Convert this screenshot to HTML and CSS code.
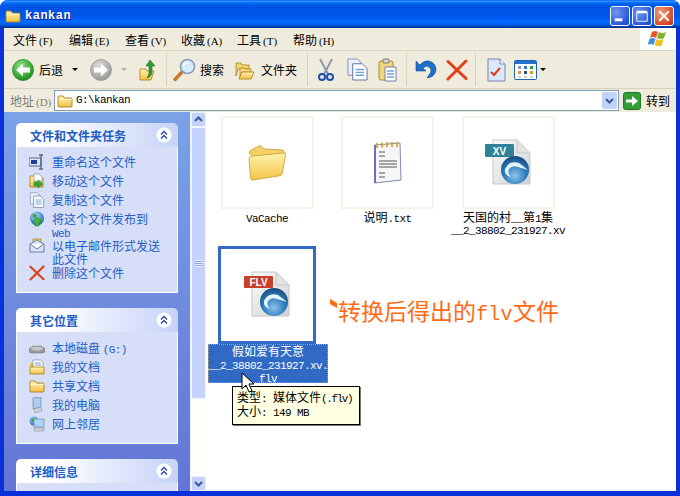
FILE: index.html
```html
<!DOCTYPE html>
<html lang="zh-CN">
<head>
  <meta charset="UTF-8">
  <title>kankan</title>
  <link rel="stylesheet" href="styles.css">
</head>
<body>
  <!-- shared icons -->
  <svg class="sprite" xmlns="http://www.w3.org/2000/svg">
    <defs>
      <linearGradient id="gFolder" x1="0" y1="0" x2="0" y2="1"><stop offset="0" stop-color="#fff3b0"/><stop offset="1" stop-color="#f3c445"/></linearGradient>
      <linearGradient id="gPage" x1="0" y1="0" x2="1" y2="1"><stop offset="0" stop-color="#fafafa"/><stop offset="1" stop-color="#cfd3d6"/></linearGradient>
      <radialGradient id="gBack" cx=".4" cy=".3" r=".8"><stop offset="0" stop-color="#8fe07f"/><stop offset=".6" stop-color="#3cae35"/><stop offset="1" stop-color="#187a1c"/></radialGradient>
      <radialGradient id="gFwd" cx=".4" cy=".3" r=".8"><stop offset="0" stop-color="#dcdcdc"/><stop offset="1" stop-color="#8f8f8f"/></radialGradient>
      <radialGradient id="gSwirl" cx=".5" cy=".7" r=".7"><stop offset="0" stop-color="#8cc4ea"/><stop offset=".55" stop-color="#2f7fbe"/><stop offset="1" stop-color="#14497f"/></radialGradient>
      <radialGradient id="gGlobe" cx=".4" cy=".3" r=".8"><stop offset="0" stop-color="#a8d8ff"/><stop offset="1" stop-color="#1a55b8"/></radialGradient>
      <symbol id="folder" viewBox="0 0 16 16">
        <path d="M1 4q0-1 1-1h4l1.500 2H14q1 0 1 1v7q0 1-1 1H2q-1 0-1-1z" fill="url(#gFolder)" stroke="#a87e1c" stroke-width=".9"/>
        <path d="M1.500 6.500h13" stroke="#fff7cf" stroke-width="1"/>
      </symbol>
      <symbol id="page-copy" viewBox="0 0 22 24">
        <path d="M1 1h10l4 4v13H1z" fill="#eaf1fb" stroke="#7f8fb5"/>
        <path d="M6 6h10l5 5v12H6z" fill="#fff" stroke="#5c6f9e"/>
        <path d="M9 12h9M9 15h9M9 18h9" stroke="#6f9fd8" stroke-width="1.400"/>
      </symbol>
      <symbol id="red-x" viewBox="0 0 22 22">
        <path d="M2 2.500l18 17M20 2l-18 18" stroke="#e1401c" stroke-width="3" stroke-linecap="round"/>
      </symbol>
      <symbol id="swirl" viewBox="0 0 30 30">
        <circle cx="15" cy="15" r="14" fill="url(#gSwirl)"/>
        <path d="M5 14q4-9 14-6l9 7-10-3q-6-2-9 2-2 4 2 8-7-2-6-8z" fill="#e6f3fb"/>
      </symbol>
      <symbol id="chev" viewBox="0 0 16 16">
        <circle cx="8" cy="8" r="7.500" fill="#fff"/>
        <path d="M5 7.500l3-3 3 3M5 11.500l3-3 3 3" fill="none" stroke="#2a52a8" stroke-width="1.500"/>
      </symbol>
    </defs>
  </svg>

  <div class="window">
    <div class="titlebar">
      <svg class="title-icon" width="16" height="16"><use href="#folder"/></svg>
      <span class="title-text">kankan</span>
      <div class="title-btns">
        <div class="tb">
          <svg width="20" height="20" viewBox="0 0 21 21"><rect x="5" y="13" width="8" height="3" fill="#fff"/></svg>
        </div>
        <div class="tb">
          <svg width="20" height="20" viewBox="0 0 21 21"><path d="M5 7h11v9H5z" fill="none" stroke="#fff"/><rect x="5" y="5" width="11" height="2.500" fill="#fff"/></svg>
        </div>
        <div class="tb tb-close">
          <svg width="20" height="20" viewBox="0 0 21 21"><path d="M5.500 5.500l10 10M15.500 5.500l-10 10" stroke="#fff" stroke-width="2"/></svg>
        </div>
      </div>
    </div>

    <div class="frame">
      <div class="menubar">
        <div class="menus">
          <span class="menu">文件<i>(F)</i></span>
          <span class="menu">编辑<i>(E)</i></span>
          <span class="menu">查看<i>(V)</i></span>
          <span class="menu">收藏<i>(A)</i></span>
          <span class="menu">工具<i>(T)</i></span>
          <span class="menu">帮助<i>(H)</i></span>
        </div>
        <div class="flag">
          <svg width="20" height="18" viewBox="0 0 20 18">
            <path d="M4 2q3-2 6 0l-2 6q-3-2-6 0z" fill="#e8562a"/>
            <path d="M11 2q3 2 7 0l-2 6q-3 2-7 0z" fill="#7ab52c"/>
            <path d="M1.500 9q3-2 6 0l-2 6q-3-2-6 0z" fill="#3e8fe0"/>
            <path d="M8.500 9q3 2 7 0l-2 7q-3 1-7-1z" fill="#f3c21a"/>
          </svg>
        </div>
      </div>

      <div class="toolbar">
        <svg class="t-back" width="22" height="22" viewBox="0 0 22 22">
          <circle cx="11" cy="11" r="10.500" fill="url(#gBack)" stroke="#2c8a2c" stroke-width=".8"/>
          <path d="M4 11l7-6.500V8.500h7v5h-7v4z" fill="#fff"/>
        </svg>
        <span class="t-label t-back-label">后退</span>
        <span class="caret t-caret1"></span>
        <svg class="t-fwd" width="22" height="22" viewBox="0 0 22 22">
          <circle cx="11" cy="11" r="10.500" fill="url(#gFwd)" stroke="#999" stroke-width=".8"/>
          <path d="M18 11l-7-6.500V8.500H4v5h7v4z" fill="#fff"/>
        </svg>
        <span class="caret caret-off t-caret2"></span>
        <svg class="t-up" width="18" height="22" viewBox="0 0 18 22">
          <path d="M1 10h6l1 2h7l-3 9H1z" fill="url(#gFolder)" stroke="#a87e1c" stroke-width=".8"/>
          <path d="M11 1l5 6h-3v7q-1 4-5 5 2-3 2-5V7H7z" fill="#2f9e34" stroke="#1c6f22" stroke-width=".6"/>
        </svg>
        <span class="sep t-sep1"></span>
        <svg class="t-search" width="23" height="24" viewBox="0 0 23 24">
          <path d="M9 14l-7 7.500" stroke="#c9792b" stroke-width="3.400" stroke-linecap="round"/>
          <circle cx="14.500" cy="8.500" r="7" fill="#d4ebfb" stroke="#8a9bb3" stroke-width="1.600"/>
          <path d="M10.500 8q1-3.500 4.500-3.500" fill="none" stroke="#fff" stroke-width="1.500"/>
        </svg>
        <span class="t-label t-search-label">搜索</span>
        <svg class="t-folders" width="20" height="20" viewBox="0 0 20 20">
          <path d="M1 3h5l1 2h7v4H3l-2 7z" fill="#f2d675" stroke="#a87e1c" stroke-width=".8"/>
          <path d="M5 8h4l1 1h6v3H7l-2 6z" fill="#f7e08c" stroke="#a87e1c" stroke-width=".8"/>
          <path d="M7 12h12l-3 7H4z" fill="url(#gFolder)" stroke="#a87e1c" stroke-width=".8"/>
        </svg>
        <span class="t-label t-folders-label">文件夹</span>
        <span class="sep t-sep2"></span>
        <svg class="t-cut" width="16" height="24" viewBox="0 0 16 24">
          <path d="M2 1l8 15M14 1L6 16" stroke="#8d97a8" stroke-width="2"/>
          <circle cx="4" cy="19" r="3" fill="none" stroke="#1f4fa8" stroke-width="2"/>
          <circle cx="12" cy="19" r="3" fill="none" stroke="#1f4fa8" stroke-width="2"/>
        </svg>
        <svg class="t-copy" width="21" height="23"><use href="#page-copy"/></svg>
        <svg class="t-paste" width="19" height="24" viewBox="0 0 19 24">
          <rect x="1" y="3" width="14" height="19" rx="2" fill="#f0d77f" stroke="#a68a32"/>
          <rect x="5" y="1" width="6" height="4" rx="1" fill="#d8d8d8" stroke="#777"/>
          <path d="M7 9h11v14H7z" fill="#fff" stroke="#6f80a8"/>
          <path d="M9 13h7M9 16h7M9 19h7" stroke="#6f9fd8" stroke-width="1.300"/>
        </svg>
        <span class="sep t-sep3"></span>
        <svg class="t-undo" width="22" height="20" viewBox="0 0 22 20">
          <path d="M1 1v10h10L8 8q3-3 6-1 4 3 0 8l-2 3q8-1 9-8 0-7-7-9Q9 0 5 5z" fill="#1f6fc8" stroke="#124e9a" stroke-width=".6"/>
        </svg>
        <svg class="t-del" width="22" height="22"><use href="#red-x"/></svg>
        <span class="sep t-sep4"></span>
        <svg class="t-props" width="19" height="24" viewBox="0 0 19 24">
          <path d="M1 1h12l5 5v17H1z" fill="#dbe8fb" stroke="#6f86b5"/>
          <path d="M13 1v5h5" fill="#fff" stroke="#6f86b5"/>
          <path d="M4 14l3 3 6-7" fill="none" stroke="#e1401c" stroke-width="2.200"/>
        </svg>
        <svg class="t-views" width="23" height="20" viewBox="0 0 23 20">
          <rect x=".5" y=".5" width="22" height="19" rx="1" fill="#fff" stroke="#1f62b5"/>
          <rect x="1" y="1" width="21" height="3" fill="#1f72cc"/>
          <rect x="4" y="6" width="3" height="3" fill="#8e8fc0"/><rect x="10" y="6" width="3" height="3" fill="#2f6fc8"/><rect x="16" y="6" width="3" height="3" fill="#2f9e44"/>
          <rect x="4" y="11" width="3" height="3" fill="#ef8a4a"/><rect x="10" y="11" width="3" height="3" fill="#1f4f9e"/><rect x="16" y="11" width="3" height="3" fill="#c9a51a"/>
          <path d="M4 17h3M10 17h3M16 17h3" stroke="#a5a5a5"/>
        </svg>
        <span class="caret t-caret3"></span>
      </div>

      <div class="addressbar">
        <span class="addr-label">地址<i>(D)</i></span>
        <div class="addr-field">
          <svg width="16" height="16"><use href="#folder"/></svg>
          <span class="lat addr-text">G:\kankan</span>
          <div class="combo">
            <svg width="15" height="17" viewBox="0 0 15 17"><path d="M4 7l3.500 3.500L11 7" fill="none" stroke="#3d5a98" stroke-width="2"/></svg>
          </div>
        </div>
        <div class="go">
          <svg width="18" height="18" viewBox="0 0 18 18">
            <rect x=".5" y=".5" width="17" height="17" rx="2" fill="#2f9e34" stroke="#1f7a26"/>
            <path d="M3 7.500h6V4l6 5-6 5v-3.500H3z" fill="#fff"/>
          </svg>
          <span>转到</span>
        </div>
      </div>

      <div class="body">
        <aside class="pane">
          <section class="panel">
            <div class="panel-head">
              <h2>文件和文件夹任务</h2>
              <svg width="16" height="16"><use href="#chev"/></svg>
            </div>
            <ul class="panel-body">
              <li class="task">
                <svg width="16" height="16" viewBox="0 0 16 16"><rect x="0" y="4" width="12" height="8" fill="#dfe6f2" stroke="#5a6478"/><rect x="2" y="6" width="6" height="4" fill="#173f9e"/><path d="M12 1v14M10 1h4M10 15h4" stroke="#5a6478" stroke-width="1.300"/></svg>
                <span>重命名这个文件</span>
              </li>
              <li class="task">
                <svg width="16" height="16" viewBox="0 0 16 16"><path d="M1 3h5l1 2h7v9H1z" fill="url(#gFolder)" stroke="#a87e1c" stroke-width=".8"/><path d="M5 1h5l3 3v4H5z" fill="#fff" stroke="#8a93a8" stroke-width=".7"/><path d="M5 9h4V7l5 4-5 4v-2H5z" fill="#3aa33f" stroke="#1f7a26" stroke-width=".5"/></svg>
                <span>移动这个文件</span>
              </li>
              <li class="task">
                <svg width="16" height="16"><use href="#page-copy"/></svg>
                <span>复制这个文件</span>
              </li>
              <li class="task">
                <svg width="16" height="16" viewBox="0 0 16 16"><circle cx="8" cy="7.500" r="7" fill="url(#gGlobe)"/><path d="M3 4q3-2 5 0 0 3-3 3zM10 9l3-2 1 2-3 3z" fill="#3fa83f"/><path d="M8 6l5 5h-3v4H6v-4H3z" fill="#47b83f" stroke="#1f7a26" stroke-width=".5"/></svg>
                <span>将这个文件发布到<br><span class="lat">Web</span></span>
              </li>
              <li class="task">
                <svg width="16" height="16" viewBox="0 0 16 16"><path d="M4 5V1h8v4" fill="#f2d675" stroke="#a87e1c" stroke-width=".7"/><path d="M1 6l7-4 7 4v8H1z" fill="#d8e3f5" stroke="#6d7ea3"/><path d="M1 6l7 5 7-5" fill="#fff" stroke="#6d7ea3"/></svg>
                <span>以电子邮件形式发送<br>此文件</span>
              </li>
              <li class="task">
                <svg width="16" height="16"><use href="#red-x"/></svg>
                <span>删除这个文件</span>
              </li>
            </ul>
          </section>

          <section class="panel panel-places">
            <div class="panel-head">
              <h2>其它位置</h2>
              <svg width="16" height="16"><use href="#chev"/></svg>
            </div>
            <ul class="panel-body">
              <li class="task">
                <svg width="16" height="16" viewBox="0 0 16 16"><path d="M0 9l4-3h8l4 3v3l-3 1H3l-3-1z" fill="#9a9a9a" stroke="#666" stroke-width=".5"/><ellipse cx="8" cy="8.500" rx="6" ry="2" fill="#c8c8c8"/></svg>
                <span>本地磁盘 <span class="lat">(G:)</span></span>
              </li>
              <li class="task">
                <svg width="16" height="16" viewBox="0 0 16 16"><path d="M1 4h3v10H1z" fill="#f0b93f"/><path d="M4 1h8l2 2v7H4z" fill="#fff" stroke="#7a8aa8" stroke-width=".7"/><path d="M1 8h14v7H1z" fill="url(#gFolder)" stroke="#a87e1c" stroke-width=".8"/><path d="M6 4h6M6 6h6" stroke="#7a9ed0"/></svg>
                <span>我的文档</span>
              </li>
              <li class="task">
                <svg width="16" height="16"><use href="#folder"/></svg>
                <span>共享文档</span>
              </li>
              <li class="task">
                <svg width="16" height="16" viewBox="0 0 16 16"><path d="M4 1l8-1v10l-8 2z" fill="#a9cdf5" stroke="#7b8794" stroke-width=".7"/><path d="M5 12l7-2 1 4-7 2z" fill="#cdd1d8" stroke="#7b8794" stroke-width=".5"/></svg>
                <span>我的电脑</span>
              </li>
              <li class="task">
                <svg width="16" height="16" viewBox="0 0 16 16"><circle cx="5" cy="5" r="4.500" fill="url(#gGlobe)"/><path d="M2 3l3-1 1 3-3 1z" fill="#3fa83f"/><rect x="5" y="3" width="10" height="8" fill="#a9d5f8" stroke="#7b8794" stroke-width=".7"/><path d="M5 12h10v3H5z" fill="#d0d4da" stroke="#7b8794" stroke-width=".5"/></svg>
                <span>网上邻居</span>
              </li>
            </ul>
          </section>

          <section class="panel">
            <div class="panel-head">
              <h2>详细信息</h2>
              <svg width="16" height="16"><use href="#chev"/></svg>
            </div>
            <div class="panel-body panel-empty"></div>
          </section>
        </aside>

        <div class="scrollbar">
          <div class="sb-btn">
            <svg width="15" height="15" viewBox="0 0 15 15"><path d="M4 9l3.500-3.500L11 9" fill="none" stroke="#3d5a98" stroke-width="2"/></svg>
          </div>
          <div class="sb-thumb"><span class="sb-grip"></span></div>
          <div class="sb-track"></div>
          <div class="sb-btn">
            <svg width="15" height="15" viewBox="0 0 15 15"><path d="M4 6l3.500 3.500L11 6" fill="none" stroke="#3d5a98" stroke-width="2"/></svg>
          </div>
        </div>

        <main class="files">
          <div class="item">
            <div class="thumb">
              <svg width="38" height="36" viewBox="0 0 38 36">
                <path d="M1 8q0-2 2-3l8-4q2-1 3 1l2 2 18 1q2 0 2 2v2l-30 3z" fill="#f3d167" stroke="#c79a2a" stroke-width=".8"/>
                <path d="M4 11l32-3q2 0 1.500 2L34 29q-.5 1.500-2 1.700L5 35q-2 .3-2.500-1.500L1 14q0-2.500 3-3z" fill="url(#gFolder)" stroke="#c79a2a" stroke-width=".8"/>
              </svg>
            </div>
            <div class="label"><span class="lat">VaCache</span></div>
          </div>
          <div class="item">
            <div class="thumb">
              <svg width="28" height="44" viewBox="0 0 28 44">
                <path d="M1 4l25-2 1 37-26 3z" fill="#f6f6f8" stroke="#7f88b5"/>
                <path d="M1 4v38" stroke="#6f6fc0" stroke-width="2"/>
                <path d="M3 2v5M8 1.500v5M13 1v5M18 1v5M23 1v5" stroke="#d8a62a" stroke-width="1.800"/>
                <path d="M5 11h6M5 15h6M5 20h18M5 23h18M5 26h18M5 32h6M5 36h6" stroke="#555" stroke-width="1.200"/>
              </svg>
            </div>
            <div class="label">说明<span class="lat">.txt</span></div>
          </div>
          <div class="item">
            <div class="thumb">
              <svg class="doc" width="46" height="46" viewBox="0 0 46 46">
                <path d="M8 1h24l13 13v31H8z" fill="url(#gPage)" stroke="#c6c6c6"/>
                <path d="M32 1v13h13z" fill="#e3e3e3" stroke="#c6c6c6"/>
                <rect x="0" y="5" width="29" height="13" rx="1" fill="#2f8396"/>
                <text x="14.500" y="15.500" class="badge">XV</text>
                <use href="#swirl" x="15" y="16" width="30" height="30"/>
              </svg>
            </div>
            <div class="label">天国的村<span class="lat">__</span>第<span class="lat">1</span>集<br><span class="lat">__2_38802_231927.xv</span></div>
          </div>
          <div class="item">
            <div class="thumb thumb-sel">
              <svg class="doc" width="46" height="46" viewBox="0 0 46 46">
                <path d="M8 1h24l13 13v31H8z" fill="url(#gPage)" stroke="#c6c6c6"/>
                <path d="M32 1v13h13z" fill="#e3e3e3" stroke="#c6c6c6"/>
                <rect x="0" y="5" width="29" height="12" rx="1" fill="#c8402c"/>
                <text x="14.500" y="15" class="badge">FLV</text>
                <use href="#swirl" x="15" y="16" width="30" height="30"/>
              </svg>
            </div>
            <div class="label label-sel">假如爱有天意<br><span class="lat">__2_38802_231927.xv.<br>flv</span></div>
          </div>

          <!-- over the list -->
          <div class="note">
            <span class="note-mark"></span>转换后得出的<span class="note-lat">flv</span>文件
          </div>
          <div class="tooltip">
            <div>类型<span class="lat">: </span>媒体文件<span class="lat tip-ext">(.flv)</span></div>
            <div>大小<span class="lat">: 149 MB</span></div>
          </div>
          <svg class="cursor" width="13" height="21" viewBox="0 0 13 21">
            <path d="M1 1v16l4-4 3 7 3-1-3-7h5z" fill="#fff" stroke="#000"/>
          </svg>
        </main>
      </div>
    </div>
  </div>
</body>
</html>
```
FILE: styles.css
```css
html, body {
  margin: 0;
  padding: 0;
}
body {
  width: 680px;
  height: 496px;
  overflow: hidden;
  background: #fff;
  font-family: "Noto Sans CJK SC", "Liberation Sans", sans-serif;
  font-size: 12px;
  line-height: 13px;
  color: #000;
}
svg {
  display: block;
  flex: none;
}
.sprite {
  width: 0;
  height: 0;
}
.lat {
  font-family: "Liberation Mono", monospace;
  font-size: 11px;
  letter-spacing: -.6px;
  line-height: 0;
}
i {
  font-family: "Liberation Serif", serif;
  font-style: normal;
  font-size: 11px;
  line-height: 0;
  margin-left: 2px;
}

.window {
  width: 680px;
  height: 496px;
  display: flex;
  flex-direction: column;
  background: #0831d9;
  border-radius: 8px 8px 0 0;
  overflow: hidden;
}

/* title bar */
.titlebar {
  height: 28px;
  flex: none;
  box-sizing: border-box;
  display: flex;
  align-items: center;
  padding: 4px 6px 0 5px;
  background: linear-gradient(#0058ee 0, #3593ff 4%, #288eff 6%, #127dff 8%, #036ffc 10%, #0262ee 14%, #0057e5 20%, #0054e3 24%, #0055eb 56%, #005bf5 66%, #026afe 76%, #0062ef 86%, #0052d6 92%, #0040ab 94%, #003092 100%);
}
.title-text {
  margin-left: 4px;
  font-family: "Liberation Mono", monospace;
  font-size: 12px;
  font-weight: bold;
  letter-spacing: .5px;
  color: #fff;
  text-shadow: 1px 1px #0f1089;
}
.title-btns {
  margin-left: auto;
  display: flex;
  gap: 2px;
}
.tb {
  width: 18px;
  height: 18px;
  border: 1px solid #fff;
  border-radius: 3px;
  background: radial-gradient(circle at 30% 30%, #6f97f0, #2a57d8 70%, #1c3fb8);
}
.tb svg {
  margin: -1px;
}
.tb-close {
  background: radial-gradient(circle at 30% 30%, #f0a080, #d8502c 65%, #b83010);
}

.frame {
  flex: 1;
  min-height: 0;
  margin: 0 4px 5px;
  display: flex;
  flex-direction: column;
  background: #efecde;
}

/* menu */
.menubar {
  height: 22px;
  flex: none;
  display: flex;
  justify-content: space-between;
  border-bottom: 1px solid #dcd8c6;
}
.menus {
  display: flex;
  align-items: center;
  gap: 17px;
  padding-left: 9px;
}
.menu {
  display: block;
  width: 39px;
  white-space: nowrap;
}
.flag {
  width: 36px;
  display: flex;
  align-items: center;
  justify-content: center;
  background: #fff;
}

/* toolbar */
.toolbar {
  height: 37px;
  flex: none;
  display: flex;
  align-items: center;
  border-bottom: 1px solid #d8d2bd;
}
.t-label {
  white-space: nowrap;
}
.caret {
  width: 0;
  height: 0;
  border-left: 3px solid transparent;
  border-right: 3px solid transparent;
  border-top: 3px solid #000;
}
.caret-off {
  border-top-color: #b5b3a6;
}
.sep {
  width: 1px;
  height: 33px;
  background: #d8d2bd;
}
.t-back { margin-left: 8px; }
.t-back-label { margin-left: 5px; }
.t-caret1 { margin-left: 9px; }
.t-fwd { margin-left: 12px; }
.t-caret2 { margin-left: 9px; }
.t-up { margin-left: 12px; }
.t-sep1 { margin-left: 9px; }
.t-search { margin-left: 6px; }
.t-search-label { margin-left: 4px; }
.t-folders { margin-left: 11px; }
.t-folders-label { margin-left: 6px; }
.t-sep2 { margin-left: 10px; }
.t-cut { margin-left: 10px; }
.t-copy { margin-left: 13px; }
.t-paste { margin-left: 10px; }
.t-sep3 { margin-left: 9px; }
.t-undo { margin-left: 8px; }
.t-del { margin-left: 9px; }
.t-sep4 { margin-left: 7px; }
.t-props { margin-left: 11px; }
.t-views { margin-left: 8px; }
.t-caret3 { margin-left: 3px; }

/* address */
.addressbar {
  height: 23px;
  flex: none;
  display: flex;
  align-items: center;
  padding-left: 6px;
}
.addr-label {
  width: 44px;
  color: #7f7c73;
  white-space: nowrap;
}
.addr-field {
  width: 561px;
  height: 19px;
  display: flex;
  align-items: center;
  gap: 3px;
  padding-left: 2px;
  border: 1px solid #7f9db9;
  background: #fff;
  box-sizing: content-box;
}
.addr-text {
  flex: 1;
  line-height: 13px;
}
.combo {
  width: 15px;
  height: 17px;
  margin-right: 1px;
  background: #c3d2f8;
  border-radius: 2px;
}
.go {
  display: flex;
  align-items: center;
  gap: 5px;
  margin-left: 4px;
}

/* body */
.body {
  flex: 1;
  min-height: 0;
  display: flex;
}
.pane {
  width: 186px;
  flex: none;
  box-sizing: border-box;
  padding: 11px 12px 0;
  display: flex;
  flex-direction: column;
  gap: 15px;
  overflow: hidden;
  background: linear-gradient(#7ba2e7, #6375d6);
}
.panel {
  flex: none;
}
.panel-head {
  height: 24px;
  display: flex;
  align-items: center;
  justify-content: space-between;
  padding: 0 6px 0 14px;
  border-radius: 5px 5px 0 0;
  background: linear-gradient(90deg, #fff 20%, #c6d3f7);
}
.panel-head h2 {
  margin: 0;
  font-size: 12px;
  font-weight: bold;
  color: #215dc6;
}
.panel-body {
  list-style: none;
  margin: 0;
  padding: 7px 0 8px 12px;
  border: 1px solid #fff;
  border-top: 0;
  background: #d6dff7;
  color: #215dc6;
}
.panel-places .panel-body {
  padding-top: 8px;
}
.panel-empty {
  height: 40px;
}
.task {
  display: flex;
  gap: 7px;
  min-height: 19px;
  line-height: 12.500px;
  padding-top: 2px;
  box-sizing: border-box;
  white-space: nowrap;
}
.task svg {
  margin-top: -2px;
}

/* scrollbar */
.scrollbar {
  width: 15px;
  flex: none;
  display: flex;
  flex-direction: column;
  background: #fdfdfa;
  border-left: 1px solid #eef2fb;
}
.sb-btn {
  height: 15px;
  background: #c3d2f8;
  border: 1px solid #eef2fb;
  box-sizing: border-box;
  border-radius: 2px;
}
.sb-btn svg {
  margin: -1px;
}
.sb-thumb {
  height: 272px;
  flex: none;
  display: flex;
  align-items: center;
  justify-content: center;
  background: #c3d3fb;
  border: 1px solid #f2f6fe;
  border-radius: 2px;
  box-sizing: border-box;
}
.sb-grip {
  width: 7px;
  height: 7px;
  background: repeating-linear-gradient(#eef3fe 0 1px, #8ca5e0 1px 2px);
}
.sb-track {
  flex: 1;
}

/* file list */
.files {
  flex: 1;
  position: relative;
  display: grid;
  grid-template-columns: repeat(3, 120.500px);
  grid-auto-rows: 133px;
  align-content: start;
  padding: 1px 0 0 1px;
  background: #fff;
  overflow: hidden;
}
.item {
  display: flex;
  flex-direction: column;
  align-items: center;
  width: 120px;
}
.thumb {
  width: 93px;
  height: 93px;
  flex: none;
  margin: 3px 0 2px;
  box-sizing: border-box;
  display: flex;
  align-items: center;
  justify-content: center;
  border: 2px solid #f5f2e6;
}
.thumb-sel {
  width: 98px;
  height: 98px;
  margin: 0;
  border: 3px solid #316ac5;
}
.doc {
  margin-top: -2px;
}
.badge {
  font-family: "Liberation Sans", sans-serif;
  font-size: 10px;
  font-weight: bold;
  fill: #fff;
  text-anchor: middle;
}
.label {
  width: 120px;
  text-align: center;
  white-space: nowrap;
  line-height: 12px;
}
.label-sel {
  align-self: flex-start;
  margin-left: 1px;
  line-height: 13px;
  color: #fff;
  background: #316ac5;
  outline: 1px dotted #c8a050;
  outline-offset: -1px;
}

/* things lying over the list */
.note {
  position: absolute;
  left: 124px;
  top: 184px;
  padding-left: 8px;
  font-size: 23px;
  line-height: 28px;
  color: #ff6a13;
  white-space: nowrap;
}
.note-lat {
  font-family: "Liberation Mono", monospace;
  font-size: 20px;
  letter-spacing: .3px;
}
.note-mark {
  position: absolute;
  left: 0;
  top: 5px;
  width: 7px;
  height: 5px;
  background: #ff6a13;
  transform: skewY(30deg);
}
.tooltip {
  position: absolute;
  left: 26px;
  top: 274px;
  width: 128px;
  height: 39px;
  box-sizing: border-box;
  padding: 3px 4px;
  line-height: 14px;
  white-space: nowrap;
  background: #ffffe1;
  border: 1px solid #000;
  box-shadow: 1px 1px 0 #777;
}
.tip-ext {
  letter-spacing: -1.400px;
}
.cursor {
  position: absolute;
  left: 35px;
  top: 260px;
}
```
